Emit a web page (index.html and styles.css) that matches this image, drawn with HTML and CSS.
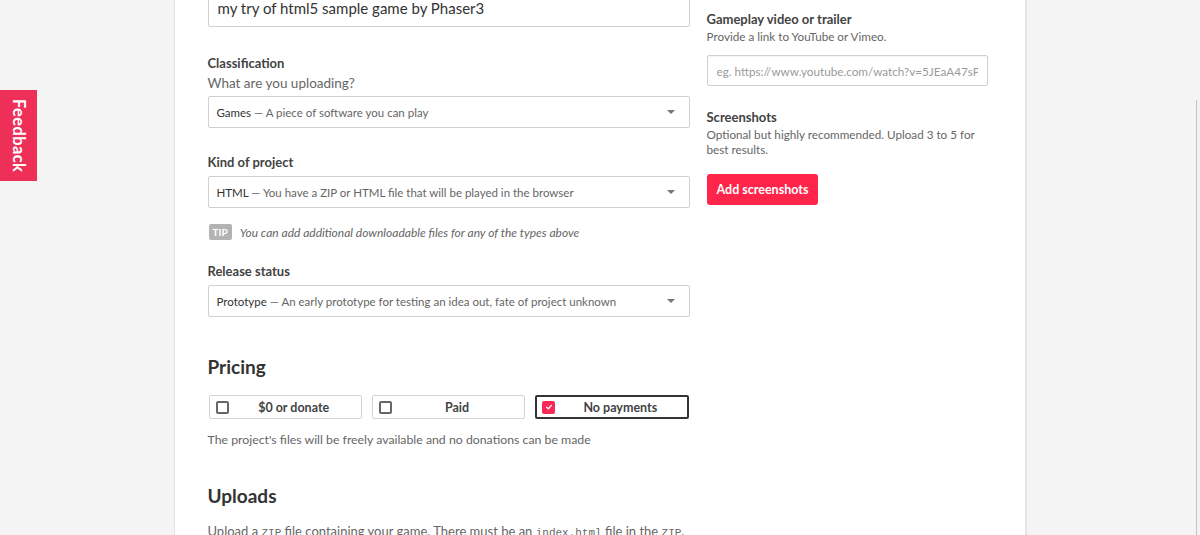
FILE: index.html
```html
<!DOCTYPE html>
<html lang="en">
<head>
<meta charset="utf-8">
<title>Create a new project</title>
<link rel="stylesheet" href="styles.css">
</head>
<body>
<a class="feedback-tab" href="#">Feedback</a>
<div class="scroll-thumb"></div>

<main class="panel">
  <form class="edit-form">
    <div class="col-main">
      <input class="text-input title-input" type="text" value="my try of html5 sample game by Phaser3">

      <div class="field field-classification">
        <div class="label">Classification</div>
        <div class="sub">What are you uploading?</div>
        <div class="select"><span><b class="opt">Games</b> — A piece of software you can play</span><i class="caret"></i></div>
      </div>

      <div class="field field-kind">
        <div class="label">Kind of project</div>
        <div class="select"><span><b class="opt">HTML</b> — You have a ZIP or HTML file that will be played in the browser</span><i class="caret"></i></div>
      </div>

      <div class="tip"><span class="tip-badge">TIP</span><em>You can add additional downloadable files for any of the types above</em></div>

      <div class="field field-release">
        <div class="label">Release status</div>
        <div class="select"><span><b class="opt">Prototype</b> — An early prototype for testing an idea out, fate of project unknown</span><i class="caret"></i></div>
      </div>

      <h2 class="section-title pricing-title">Pricing</h2>
      <div class="pricing-options">
        <label class="price-btn"><span class="check"></span><span class="price-text">$0 or donate</span></label>
        <label class="price-btn"><span class="check"></span><span class="price-text">Paid</span></label>
        <label class="price-btn selected"><span class="check checked"><svg viewBox="0 0 10 10" width="8" height="8"><path d="M2 5.2 L4.2 7.2 L8 3" fill="none" stroke="#fff" stroke-width="1.6" stroke-linecap="round" stroke-linejoin="round"/></svg></span><span class="price-text">No payments</span></label>
      </div>
      <p class="hint">The project's files will be freely available and no donations can be made</p>

      <h2 class="section-title uploads-title">Uploads</h2>
      <p class="uploads-text">Upload a <code>ZIP</code> file containing your game. There must be an <code>index.html</code> file in the <code>ZIP</code>. Or upload a <code>.html</code> file that contains your entire game.</p>
    </div>

    <aside class="col-side">
      <div class="label">Gameplay video or trailer</div>
      <div class="sub small">Provide a link to YouTube or Vimeo.</div>
      <input class="text-input video-input" type="text" placeholder="eg. https://www.youtube.com/watch?v=5JEaA47sPHk">

      <div class="label screens-label">Screenshots</div>
      <div class="sub small screens-sub">Optional but highly recommended. Upload 3 to 5 for best results.</div>
      <button type="button" class="red-btn">Add screenshots</button>
    </aside>
  </form>
</main>
</body>
</html>
```

FILE: styles.css
```css
* { box-sizing: border-box; }

html, body {
  margin: 0;
  padding: 0;
}

body {
  background: #f4f4f4;
  font-family: Lato, "Open Sans", "Liberation Sans", sans-serif;
  color: #434343;
  overflow: hidden;
  height: 535px;
}

/* side feedback tab */
.feedback-tab {
  position: fixed;
  left: 0;
  top: 90px;
  width: 37px;
  height: 91px;
  background: #ee3058;
  color: #fff;
  text-decoration: none;
  font-weight: 700;
  font-size: 16.5px;
  letter-spacing: 0.4px;
  writing-mode: vertical-rl;
  display: flex;
  align-items: center;
  justify-content: center;
}

.scroll-thumb {
  position: fixed;
  right: 0;
  top: 100px;
  bottom: 0;
  width: 4px;
  border-left: 1px solid #c4c4c4;
  background: #f2f2f2;
}

/* white content column */
.panel {
  width: 853px;
  margin: 0 auto;
  min-height: 600px;
  background: #fff;
  border-left: 1px solid #e2e2e2;
  border-right: 2px solid #e4e4e4;
  padding: 0 37px 0 33px;
}

.edit-form {
  display: flex;
  gap: 17px;
  margin-top: -11px;
}

.col-main {
  width: 482px;
  flex: none;
}

.col-side {
  width: 281px;
  flex: none;
  padding-top: 20px;
}

.text-input {
  display: block;
  width: 100%;
  font-family: inherit;
  border: 1px solid #d0d0d0;
  border-radius: 2px;
  background: #fff;
  color: #333;
  box-shadow: inset 0 1px 1px rgba(0,0,0,0.04);
  outline: none;
}

.title-input {
  height: 38px;
  font-size: 15px;
  padding: 0 9px;
}

.label {
  font-size: 13px;
  font-weight: 700;
  line-height: 20px;
  color: #434343;
}

.sub {
  font-size: 13.5px;
  line-height: 20px;
  color: #666;
}

.sub.small {
  font-size: 11.7px;
  line-height: 15px;
}

.field-classification { margin-top: 26px; }
.field-kind { margin-top: 24px; }
.field-release { margin-top: 21px; }

.select {
  margin-top: 3px;
  height: 32px;
  border: 1px solid #d0d0d0;
  border-radius: 2px;
  display: flex;
  align-items: center;
  justify-content: space-between;
  padding: 0 14px 0 8px;
  font-size: 11.5px;
  color: #666;
}

.field-kind .select,
.field-release .select { margin-top: 4px; }

.select .opt {
  font-weight: 400;
  color: #333;
}

.caret {
  width: 0;
  height: 0;
  border-left: 4.5px solid transparent;
  border-right: 4.5px solid transparent;
  border-top: 4.5px solid #777;
}

.tip {
  margin-top: 16px;
  display: flex;
  align-items: center;
  gap: 8px;
  font-size: 12px;
  color: #666;
  height: 16px;
}

.tip-badge {
  background: #b3b3b3;
  color: #fff;
  font-weight: 700;
  font-size: 10px;
  line-height: 16px;
  padding: 0 4px;
  border-radius: 2px;
  margin-left: 1px;
}

.section-title {
  font-size: 19px;
  line-height: 24px;
  font-weight: 700;
  color: #333;
  margin: 0;
}

.pricing-title { margin-top: 38px; }
.uploads-title { margin-top: 35px; }

.pricing-options {
  margin-top: 16px;
  display: flex;
  gap: 10px;
  margin-left: 1px;
}

.price-btn {
  flex: 1;
  height: 24px;
  border: 1px solid #d4d4d4;
  border-radius: 2px;
  display: flex;
  align-items: center;
  padding: 0 0 0 6px;
  font-size: 12.5px;
  font-weight: 700;
  color: #434343;
  background: #fff;
}

.price-btn.selected {
  border: 2px solid #333;
  padding-left: 5px;
}

.check {
  width: 13px;
  height: 13px;
  border: 2px solid #666;
  border-radius: 2px;
  flex: none;
  display: flex;
  align-items: center;
  justify-content: center;
}

.check.checked {
  background: #f52a57;
  border-color: #f52a57;
}

.price-text {
  flex: 1;
  text-align: center;
  padding-right: 2px;
}

.hint {
  margin: 12px 0 0;
  font-size: 12.3px;
  line-height: 18px;
  color: #666;
}

.uploads-text {
  margin: 14px 0 0;
  font-size: 13px;
  line-height: 18px;
  color: #666;
}

.uploads-text code {
  font-family: "Liberation Mono", "DejaVu Sans Mono", monospace;
  font-size: 11px;
}

.video-input {
  margin-top: 11px;
  height: 31px;
  font-size: 11.7px;
  padding: 0 9px;
}

.video-input::placeholder { color: #9a9a9a; }

.screens-label { margin-top: 21px; }
.screens-sub { margin-top: 0; }

.red-btn {
  margin-top: 17px;
  height: 31px;
  padding: 0 10px;
  border: none;
  border-radius: 3px;
  background: #ff2449;
  color: #fff;
  font-family: inherit;
  font-size: 12.5px;
  font-weight: 700;
}
```
